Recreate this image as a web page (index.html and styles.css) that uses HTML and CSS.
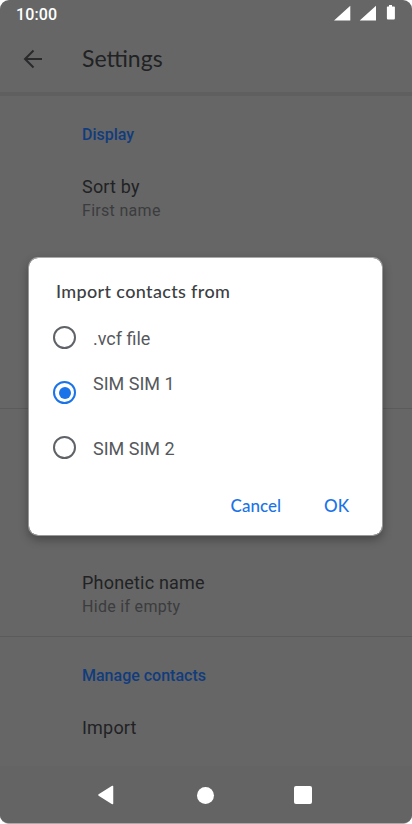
FILE: index.html
```html
<!DOCTYPE html>
<html lang="en">
<head>
<meta charset="utf-8">
<title>Settings</title>
<link rel="stylesheet" href="styles.css">
</head>
<body>
<div class="screen">
  <header class="status">
    <span class="clock">10:00</span>
    <svg class="status-icons" width="62" height="16" viewBox="0 0 62 16"><path d="M0 15.4 16.3.8V15.4ZM25.700 15.400 42 .8V15.400ZM52.900 1.500h2.100V0h3v1.500h2.100q.8 0 .8.8v11q0 1.200-1 1.200h-6q-1 0-1-1.200v-11q0-.8.800-.8Z" fill="#fff"/></svg>
  </header>
  <div class="appbar">
    <svg class="back" width="20" height="20" viewBox="0 0 20 20"><path d="M19 10H2M10.500 1.500 2 10l8.500 8.500" fill="none" stroke="#292a2c" stroke-width="2"/></svg>
    <h1>Settings</h1>
  </div>
  <main>
    <section class="display">
      <h2><span class="w-display">Display</span></h2>
      <div class="item sort"><p class="label w-sort">Sort by</p><p class="value w-first">First name</p></div>
    </section>
    <section class="names">
      <div class="item"><p class="label w-phonetic">Phonetic name</p><p class="value w-hide">Hide if empty</p></div>
    </section>
    <section class="manage">
      <h2><span class="w-manage">Manage contacts</span></h2>
      <div class="item import"><p class="label w-import">Import</p></div>
    </section>
  </main>
  <nav class="navbar">
    <svg width="16" height="20" viewBox="0 0 16 20"><path d="M14.500 1.500v17L1 10Z" fill="#fff" stroke="#fff" stroke-width="1.500" stroke-linejoin="round"/></svg>
    <span class="home"></span>
    <span class="recent"></span>
  </nav>
  <div class="dialog" role="dialog">
    <h3>Import contacts from</h3>
    <div class="options">
      <div class="option vcf"><span class="radio"></span><span class="name">.vcf file</span></div>
      <div class="option one"><span class="radio checked"></span><span class="name">SIM SIM 1</span></div>
      <div class="option two"><span class="radio"></span><span class="name">SIM SIM 2</span></div>
    </div>
    <div class="actions"><span class="cancel">Cancel</span><span class="ok">OK</span></div>
  </div>
</div>
</body>
</html>
```
FILE: styles.css
```css
* { box-sizing: border-box; }
body { margin: 0; background: #fff; font-family: Roboto, "Liberation Sans", sans-serif; }
h1, h2, h3, p { margin: 0; font-weight: 400; white-space: nowrap; }
svg { display: block; flex: none; }
.screen { position: relative; display: flex; flex-direction: column; width: 412px; height: 824px; overflow: hidden; background: #666; border-radius: 9px; border-bottom: 1px solid #aaa; }
.status { display: flex; justify-content: space-between; height: 28px; padding: 5px 16px 0 16px; }
.clock { color: #fff; font-size: 16px; font-weight: 500; line-height: 19px; letter-spacing: 0.15px; }
.status-icons { margin-right: 0; }
.appbar { display: flex; align-items: center; height: 68px; padding: 0 0 4px 23px; border-bottom: 4px solid #5f5f5f; }
.back { margin-top: 1px; }
h1 { margin-left: 39px; color: #212224; font: 400 23px/30px Lato, sans-serif; letter-spacing: 0; }
.display { height: 313px; padding: 29px 0 0 82px; border-bottom: 1px solid #5b5b5b; }
h2 { color: #113c7d; font-size: 16px; font-weight: 500; line-height: 20px; }
.sort { margin-top: 30px; }
.label { color: #212224; font-size: 18px; line-height: 24px; letter-spacing: 0.2px; }
.value { color: #3b3c3e; font-size: 16px; line-height: 24px; letter-spacing: 0.3px; }
.names { height: 228px; padding: 162px 0 0 82px; border-bottom: 1px solid #5b5b5b; }
.manage { height: 129px; padding: 29px 0 0 82px; }
.import { margin-top: 30px; }
.navbar { display: flex; align-items: center; flex: 1; padding: 1px 0 0 98px; background: #646464; }
.home { width: 17px; height: 17px; margin-left: 83px; border-radius: 50%; background: #fff; }
.recent { width: 18px; height: 18px; margin-left: 80px; border-radius: 2px; background: #fff; }
.dialog { position: absolute; left: 28px; top: 257px; width: 355px; height: 279px; padding: 21px 0 0 25px; border: 1px solid #999; border-top-color: #aaa; border-radius: 10px; background: #fff; background-clip: padding-box; box-shadow: 0 4px 10px rgba(0,0,0,.3); }
h3 { margin-left: 2px; color: #3c4043; font: 500 18px/24px Lato, sans-serif; letter-spacing: 0.35px; }
.options { display: flex; flex-direction: column; margin-top: 7px; }
.option { display: flex; align-items: center; height: 55px; color: #55585c; font-size: 18px; line-height: 24px; }
.radio { display: grid; place-items: center; width: 23px; height: 23px; margin-left: -1px; border: 2px solid #5f6368; border-radius: 50%; }
.checked { border-color: #1a73e8; }
.checked::after { content: ""; width: 12px; height: 12px; border-radius: 50%; background: #1a73e8; }
.name { margin: 2px 0 0 17px; }
.one .name { margin-top: -17px; }
.actions { display: flex; justify-content: flex-end; margin-top: 19px; padding-right: 33px; color: #1a73e8; font: 500 17px/24px Lato, sans-serif; }
.ok { margin-left: 43px; }
```
